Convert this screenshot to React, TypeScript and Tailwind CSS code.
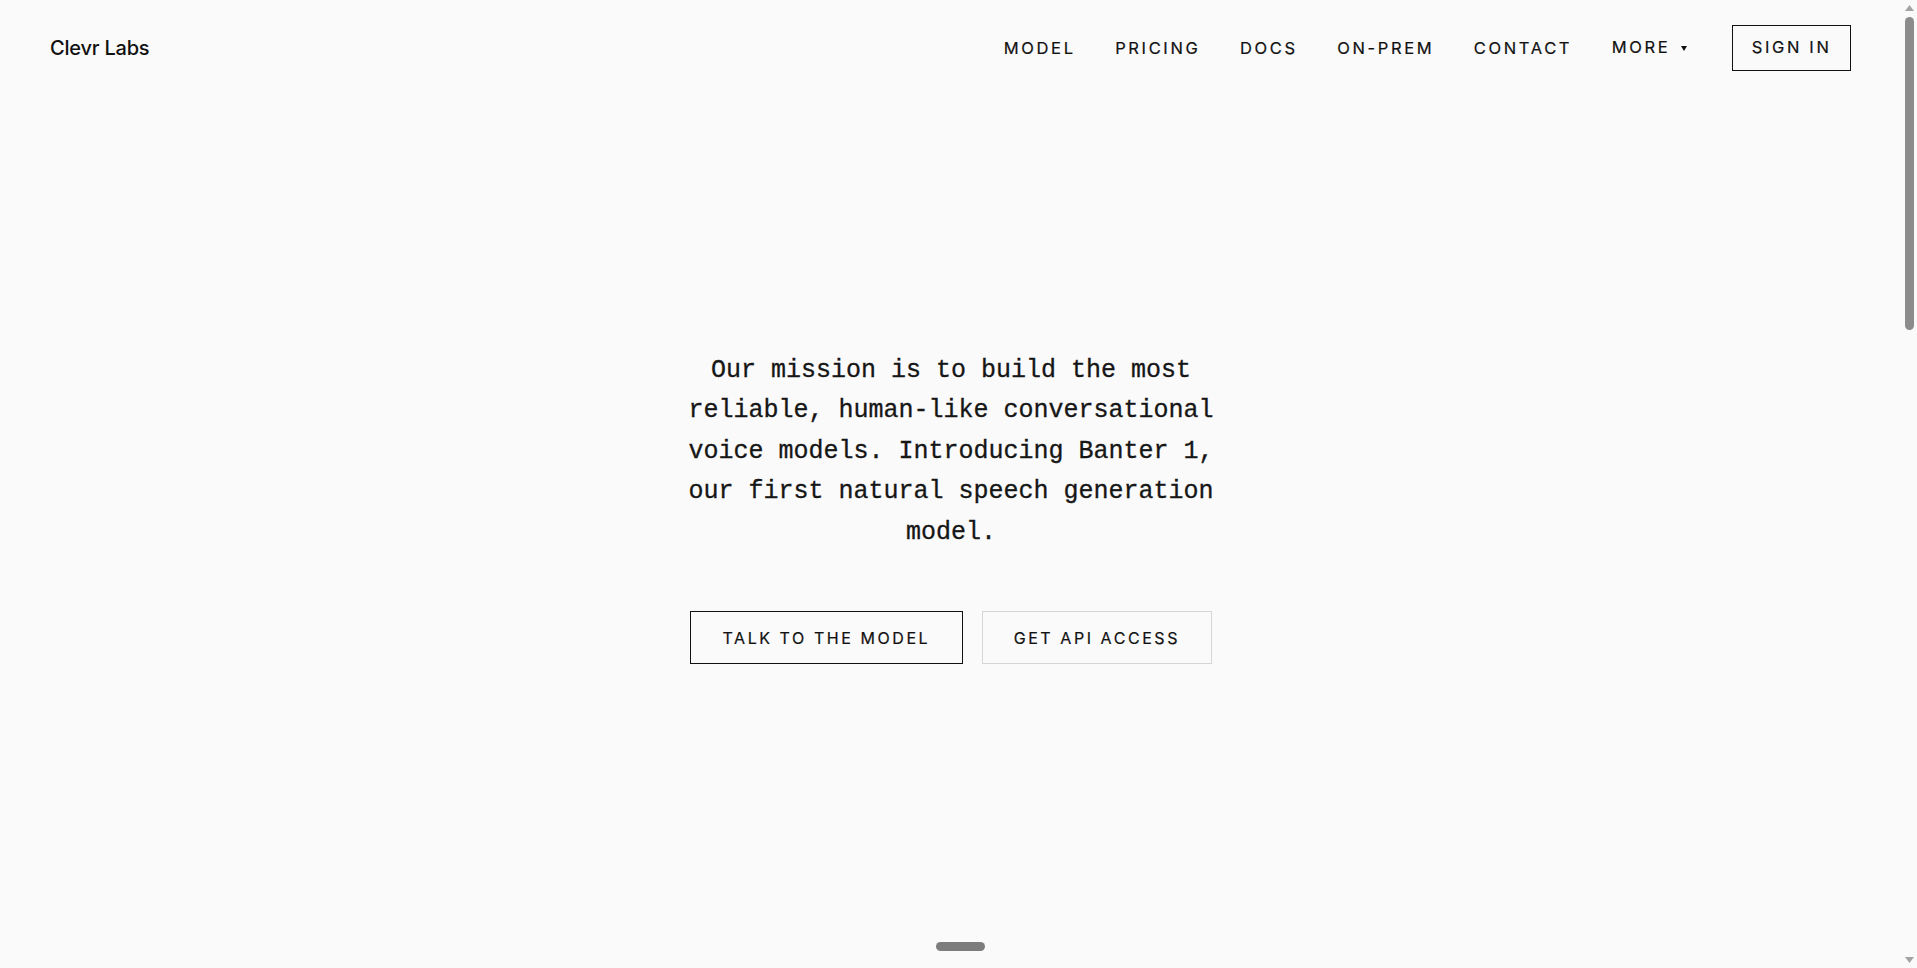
import React from "react";

const navItems = ["MODEL", "PRICING", "DOCS", "ON-PREM", "CONTACT"];

function FakeScrollbar() {
  return (
    <div className="flex h-[968px] w-[15px] shrink-0 flex-col items-center bg-[#fafafa]">
      <svg className="mt-[5px]" width="9" height="6" viewBox="0 0 9 6">
        <path d="M4.5 0 L9 6 L0 6 Z" fill="#a3a3a3" />
      </svg>
      <div className="mt-[6px] h-[313px] w-[9px] rounded-full bg-[#8c8c8c]" />
      <div className="flex-1" />
      <svg className="mb-[5px]" width="9" height="6" viewBox="0 0 9 6">
        <path d="M0 0 L9 0 L4.5 6 Z" fill="#a3a3a3" />
      </svg>
    </div>
  );
}

export default function App() {
  return (
    <div
      className="flex h-[968px] overflow-hidden bg-[#fafafa] text-[#111111]"
      style={{ fontFamily: "Inter, 'Liberation Sans', sans-serif" }}
    >
      <div className="relative flex-1">
        <header className="flex h-[95px] items-center justify-between pl-[50px] pr-[51px]">
          <div className="text-[20px] font-medium leading-none tracking-[-0.01em] text-[#111]">
            Clevr Labs
          </div>
          <nav className="flex items-center">
            <ul className="flex items-center gap-[39.5px]">
              {navItems.map((item) => (
                <li key={item}>
                  <a className="text-[16.5px] leading-none tracking-[0.16em] text-[#111] [-webkit-text-stroke:0.2px_currentColor]" href="#">
                    {item}
                  </a>
                </li>
              ))}
              <li className="flex items-center">
                <a className="text-[16.5px] leading-none tracking-[0.16em] text-[#111] [-webkit-text-stroke:0.2px_currentColor]" href="#">
                  MORE
                </a>
                <svg className="ml-[11px] mt-[1px]" width="6" height="5" viewBox="0 0 6 5">
                  <path d="M0 0 L6 0 L3 5 Z" fill="#111" />
                </svg>
              </li>
            </ul>
            <button className="ml-[45px] flex h-[46px] items-center border border-[#111] px-[18.5px] text-[16.5px] leading-none tracking-[0.16em] text-[#111] [-webkit-text-stroke:0.2px_currentColor]">
              SIGN IN
            </button>
          </nav>
        </header>

        <main className="flex flex-col items-center pt-[256px]">
          <p
            className="w-[540px] text-center text-[25px] leading-[40.4px] text-[#161616] [-webkit-text-stroke:0.3px_currentColor]"
            style={{ fontFamily: "'Liberation Mono', 'DejaVu Sans Mono', monospace" }}
          >
            Our mission is to build the most reliable, human-like conversational voice models.
            Introducing Banter 1, our first natural speech generation model.
          </p>
          <div className="mt-[58px] flex gap-[19px]">
            <button className="flex h-[53px] items-center border border-[#111] px-[31.5px] text-[16px] leading-none tracking-[0.16em] text-[#111] [-webkit-text-stroke:0.2px_currentColor]">
              TALK TO THE MODEL
            </button>
            <button className="flex h-[53px] items-center border border-[#d6d6d6] bg-[#fafafa] px-[31px] text-[16px] leading-none tracking-[0.16em] text-[#111] [-webkit-text-stroke:0.2px_currentColor]">
              GET API ACCESS
            </button>
          </div>
        </main>

        <div className="pointer-events-none absolute bottom-[17px] left-[936px] h-[9px] w-[49px] rounded-full bg-[#7d7d7d]" />
      </div>
      <FakeScrollbar />
    </div>
  );
}
